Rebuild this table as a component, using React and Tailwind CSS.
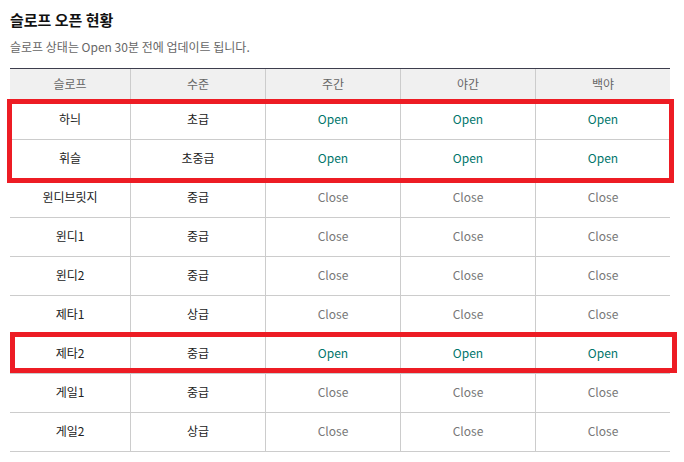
import React from 'react';

const rows = [
  { name: '하늬', level: '초급', day: 'Open', night: 'Open', white: 'Open' },
  { name: '휘슬', level: '초중급', day: 'Open', night: 'Open', white: 'Open' },
  { name: '윈디브릿지', level: '중급', day: 'Close', night: 'Close', white: 'Close' },
  { name: '윈디1', level: '중급', day: 'Close', night: 'Close', white: 'Close' },
  { name: '윈디2', level: '중급', day: 'Close', night: 'Close', white: 'Close' },
  { name: '제타1', level: '상급', day: 'Close', night: 'Close', white: 'Close' },
  { name: '제타2', level: '중급', day: 'Open', night: 'Open', white: 'Open' },
  { name: '게일1', level: '중급', day: 'Close', night: 'Close', white: 'Close' },
  { name: '게일2', level: '상급', day: 'Close', night: 'Close', white: 'Close' },
];

const headers = ['슬로프', '수준', '주간', '야간', '백야'];

const Status = ({ value }) => (
  <span className={value === 'Open' ? 'text-[#00766c]' : 'text-[#777]'}>{value}</span>
);

const App = () => {
  return (
    <div
      className="relative w-[684px] h-[462px] bg-white overflow-hidden"
      style={{ fontFamily: '"Noto Sans CJK KR", "Noto Sans", sans-serif' }}
    >
      <div className="pl-[10px] pt-[9px]">
        <h2 className="text-[15px] font-bold text-[#111] leading-[22px]">슬로프 오픈 현황</h2>
        <p className="text-[12px] text-[#666] leading-[18px] mt-[7px]">
          슬로프 상태는 Open 30분 전에 업데이트 됩니다.
        </p>

        {/* table */}
        <div className="mt-[12px] w-[660px] border-t border-[#3d3d4d]">
          <div className="grid grid-cols-[120px_135px_135px_135px_135px] h-[32px] bg-[#f0f0f0] text-[12px] text-[#666]">
            {headers.map((h, i) => (
              <div
                key={h}
                className={'flex items-center justify-center pb-[2px] ' + (i > 0 ? 'border-l border-[#cccccc]' : '')}
              >
                {h}
              </div>
            ))}
          </div>
          {rows.map((r) => (
            <div
              key={r.name}
              className="grid grid-cols-[120px_135px_135px_135px_135px] h-[39px] border-b border-[#cccccc] text-[12px] text-[#222]"
            >
              <div className="flex items-center justify-center pb-[2px]">{r.name}</div>
              <div className="flex items-center justify-center pb-[2px] border-l border-[#cccccc]">{r.level}</div>
              <div className="flex items-center justify-center pb-[2px] border-l border-[#cccccc]">
                <Status value={r.day} />
              </div>
              <div className="flex items-center justify-center pb-[2px] border-l border-[#cccccc]">
                <Status value={r.night} />
              </div>
              <div className="flex items-center justify-center pb-[2px] border-l border-[#cccccc]">
                <Status value={r.white} />
              </div>
            </div>
          ))}
        </div>
      </div>

      {/* highlight boxes */}
      <div className="absolute left-[7px] top-[99px] w-[667px] h-[84px] border-[5px] border-[#ed1c24]" />
      <div className="absolute left-[10px] top-[332px] w-[667px] h-[41px] border-[5px] border-[#ed1c24]" />
    </div>
  );
};

export default App;
